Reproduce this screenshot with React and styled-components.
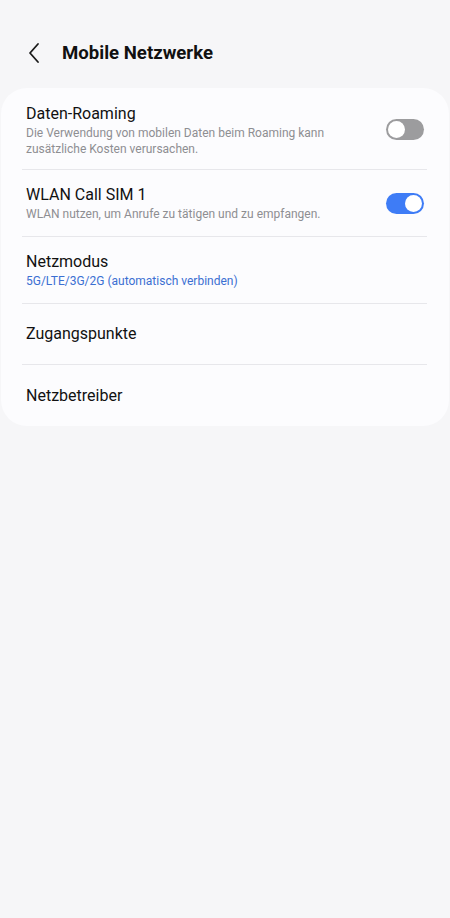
import React, { useState } from 'react';
import styled, { createGlobalStyle } from 'styled-components';

const GlobalStyle = createGlobalStyle`
  html, body {
    margin: 0;
    padding: 0;
    background: #f6f6f8;
  }
  body {
    font-family: Roboto, Inter, 'Noto Sans', sans-serif;
    -webkit-font-smoothing: antialiased;
  }
`;

const Page = styled.div`
  min-height: 918px;
  background: #f6f6f8;
  padding: 0 1px;
  box-sizing: border-box;
`;

const Header = styled.header`
  display: flex;
  align-items: center;
  gap: 20px;
  height: 88px;
  padding: 18px 0 0 25px;
  box-sizing: border-box;
`;

const BackButton = styled.button`
  display: flex;
  align-items: center;
  justify-content: center;
  width: 16px;
  height: 24px;
  padding: 0;
  border: none;
  background: transparent;
  color: #1a1a1a;
`;

const Title = styled.h1`
  margin: 0;
  font-size: 18.6px;
  font-weight: 700;
  color: #111;
`;

const Card = styled.section`
  background: #fcfcfe;
  border-radius: 26px;
  padding: 2px 22px 0 21px;
`;

const Row = styled.div`
  display: flex;
  align-items: center;
  gap: 16px;
  min-height: ${(p) => p.height}px;
  padding: 0 3px 0 4px;
  box-sizing: border-box;
  border-bottom: ${(p) => (p.last ? 'none' : '1px solid #e7e7eb')};
`;

const Texts = styled.div`
  flex: 1;
  display: flex;
  flex-direction: column;
`;

const RowTitle = styled.div`
  font-size: 16px;
  line-height: 22px;
  color: #111;
`;

const RowSub = styled.div`
  font-size: 12px;
  line-height: 16px;
  color: ${(p) => (p.accent ? '#3b6fd2' : '#8e8e92')};
  max-width: 300px;
`;

const Track = styled.button`
  position: relative;
  flex: none;
  width: 38px;
  height: 21px;
  border-radius: 11px;
  border: none;
  padding: 0;
  background: ${(p) => (p.on ? '#3e7cf6' : '#9c9c9e')};
  cursor: pointer;
`;

const Knob = styled.span`
  position: absolute;
  top: 2px;
  left: ${(p) => (p.on ? '19px' : '2px')};
  width: 17px;
  height: 17px;
  border-radius: 50%;
  background: #fff;
  box-sizing: border-box;
`;

const Switch = ({ on, onToggle }) => (
  <Track on={on} onClick={onToggle}>
    <Knob on={on} />
  </Track>
);

const Chevron = () => (
  <svg width="14" height="22" viewBox="0 0 14 22" fill="none">
    <path d="M11 2 L3 11 L11 20" stroke="currentColor" strokeWidth="1.8" strokeLinecap="round" strokeLinejoin="round" />
  </svg>
);

export default function App() {
  const [roaming, setRoaming] = useState(false);
  const [wlanCall, setWlanCall] = useState(true);

  return (
    <Page>
      <GlobalStyle />
      <Header>
        <BackButton aria-label="Zurück">
          <Chevron />
        </BackButton>
        <Title>Mobile Netzwerke</Title>
      </Header>
      <Card>
        <Row height={80}>
          <Texts>
            <RowTitle>Daten-Roaming</RowTitle>
            <RowSub>Die Verwendung von mobilen Daten beim Roaming kann zusätzliche Kosten verursachen.</RowSub>
          </Texts>
          <Switch on={roaming} onToggle={() => setRoaming(!roaming)} />
        </Row>
        <Row height={67}>
          <Texts>
            <RowTitle>WLAN Call SIM 1</RowTitle>
            <RowSub>WLAN nutzen, um Anrufe zu tätigen und zu empfangen.</RowSub>
          </Texts>
          <Switch on={wlanCall} onToggle={() => setWlanCall(!wlanCall)} />
        </Row>
        <Row height={67}>
          <Texts>
            <RowTitle>Netzmodus</RowTitle>
            <RowSub accent>5G/LTE/3G/2G (automatisch verbinden)</RowSub>
          </Texts>
        </Row>
        <Row height={61}>
          <Texts>
            <RowTitle>Zugangspunkte</RowTitle>
          </Texts>
        </Row>
        <Row height={61} last>
          <Texts>
            <RowTitle>Netzbetreiber</RowTitle>
          </Texts>
        </Row>
      </Card>
    </Page>
  );
}
